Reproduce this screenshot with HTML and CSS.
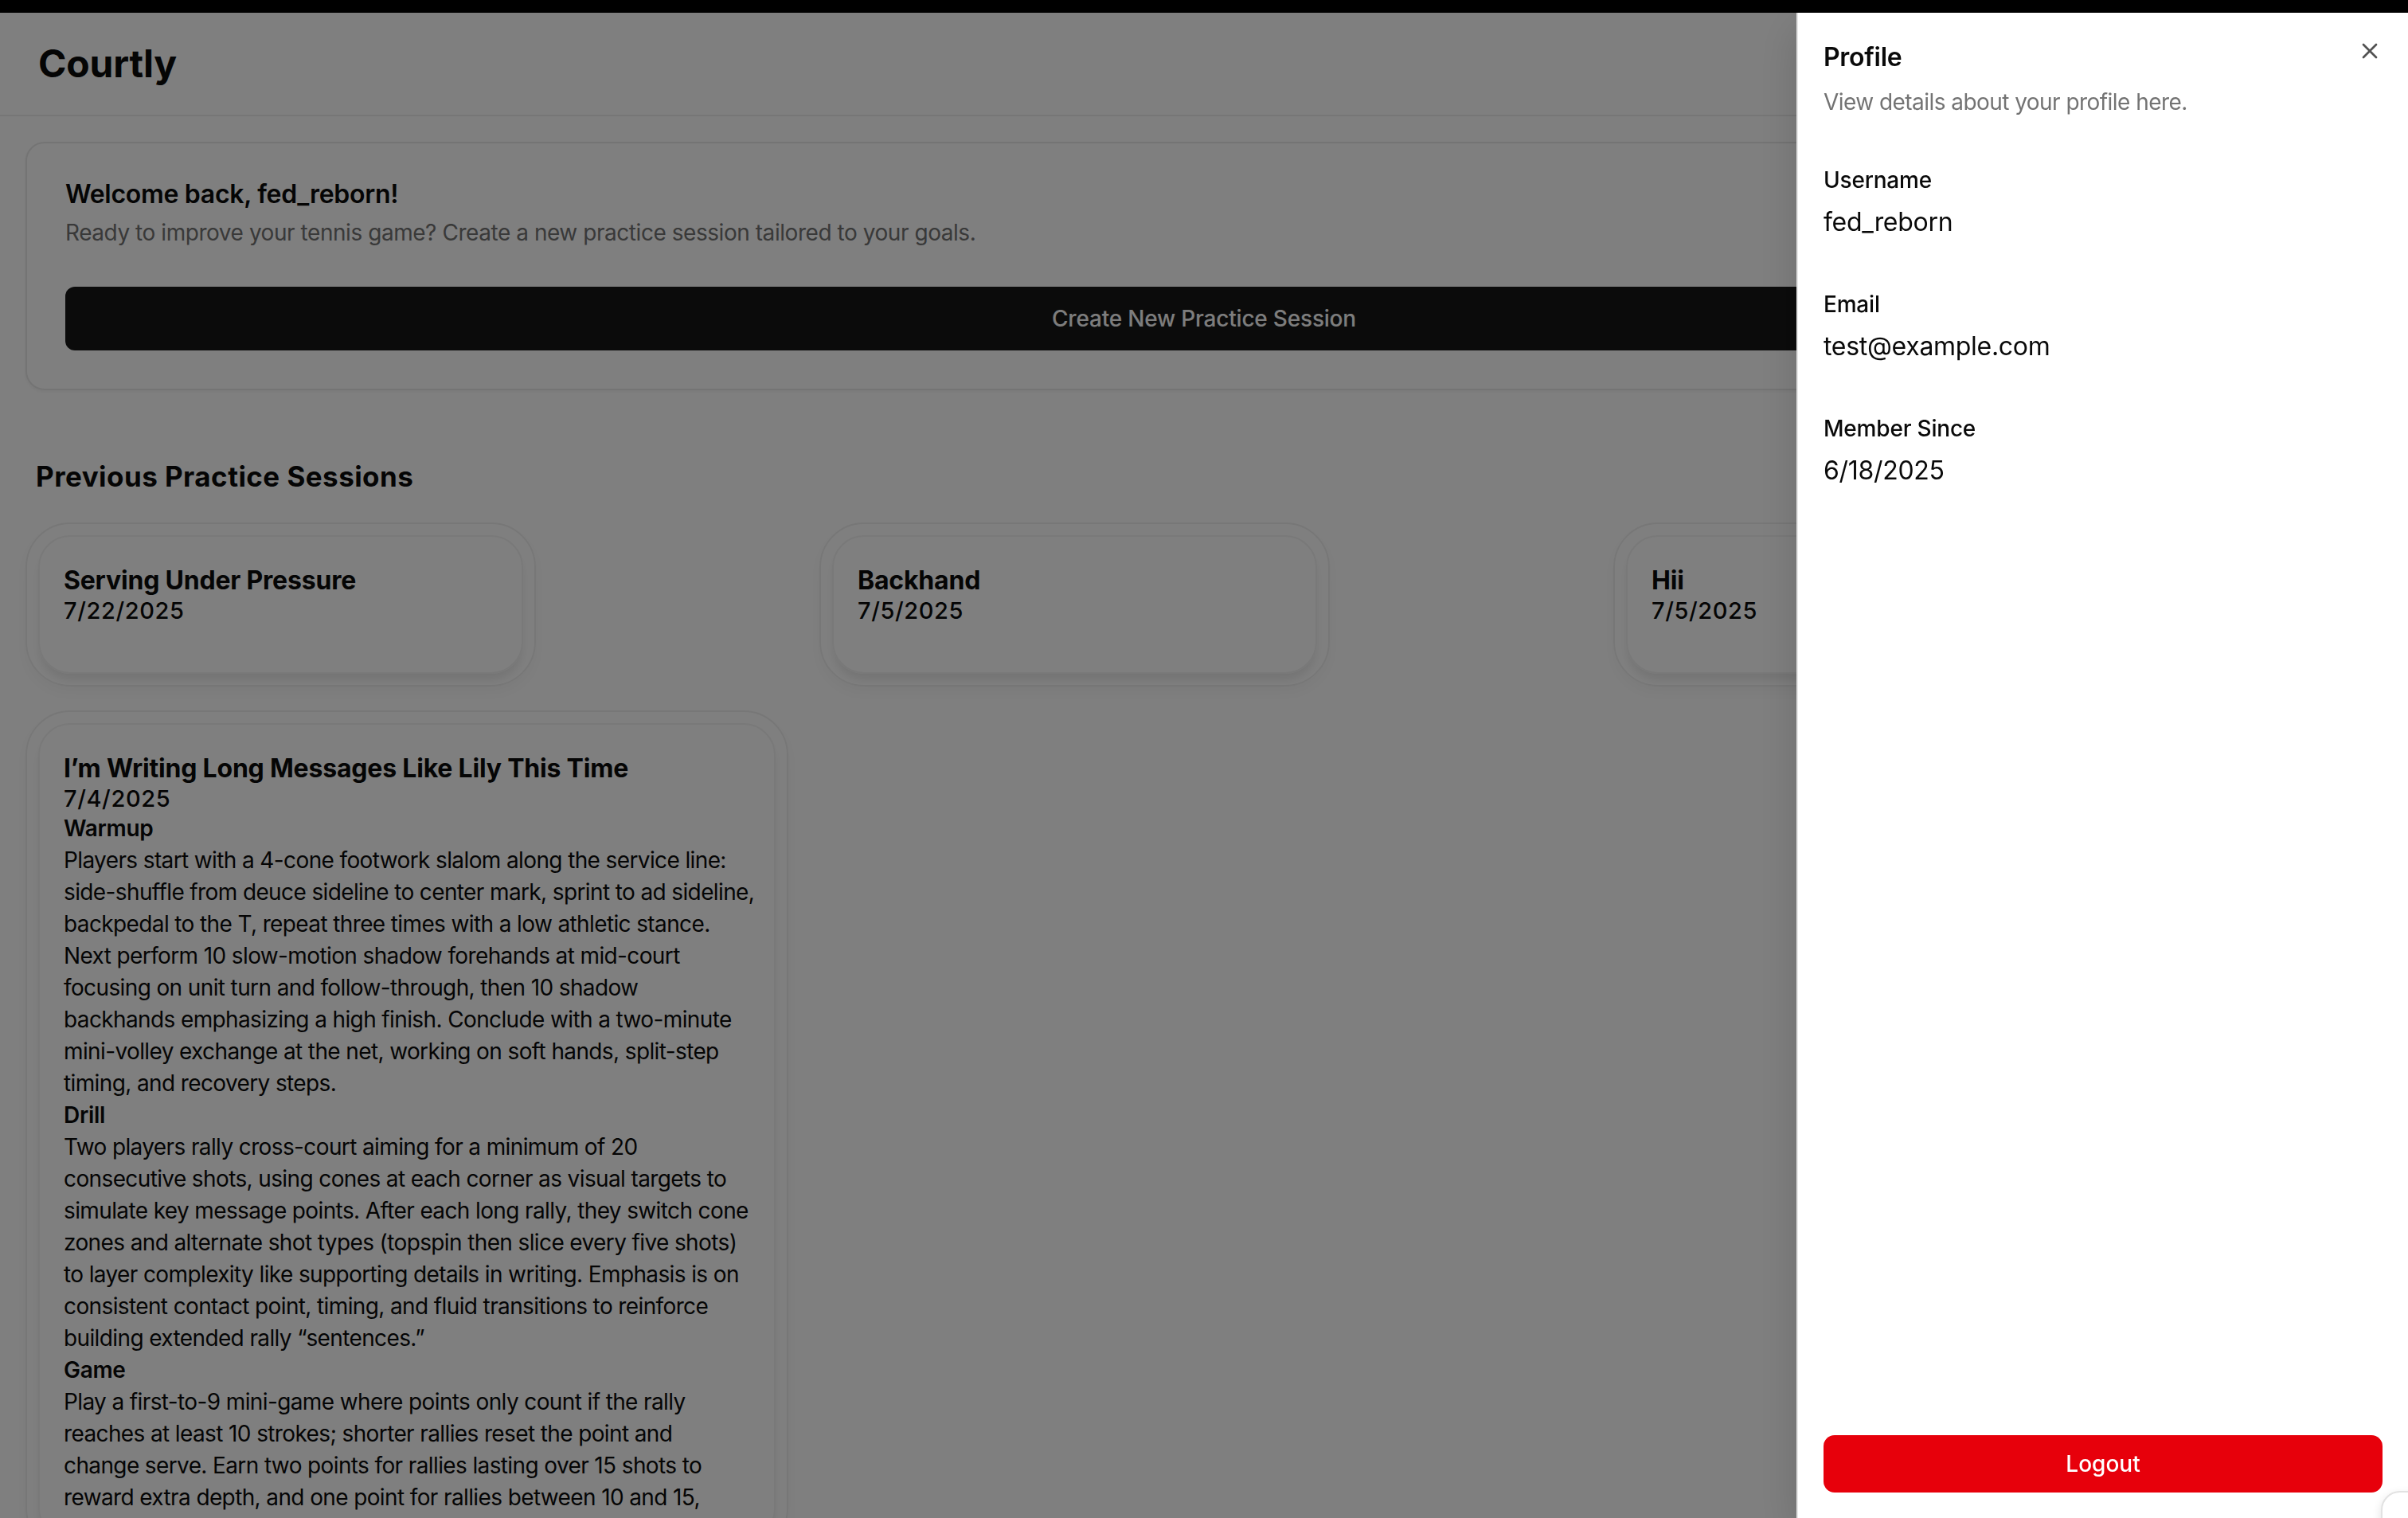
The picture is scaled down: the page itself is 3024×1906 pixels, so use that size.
FILE: index.html
```html
<!DOCTYPE html>
<html lang="en">
<head>
<meta charset="utf-8">
<title>Courtly</title>
<link rel="stylesheet" href="styles.css">
</head>
<body>
<div class="topbar"></div>
<div class="app">
  <header class="site-header">
    <h1 class="brand">Courtly</h1>
  </header>
  <main class="main">
    <section class="welcome-card">
      <div class="welcome-head">
        <h2 class="welcome-title">Welcome back, fed_reborn!</h2>
        <p class="welcome-desc">Ready to improve your tennis game? Create a new practice session tailored to your goals.</p>
      </div>
      <button class="primary-btn" type="button">Create New Practice Session</button>
    </section>

    <section class="sessions">
      <h2 class="sessions-title">Previous Practice Sessions</h2>
      <div class="session-grid">
        <article class="session">
          <div class="session-inner">
            <h3 class="session-title">Serving Under Pressure</h3>
            <p class="session-date">7/22/2025</p>
          </div>
        </article>
        <article class="session">
          <div class="session-inner">
            <h3 class="session-title">Backhand</h3>
            <p class="session-date">7/5/2025</p>
          </div>
        </article>
        <article class="session">
          <div class="session-inner">
            <h3 class="session-title">Hii</h3>
            <p class="session-date">7/5/2025</p>
          </div>
        </article>
        <article class="session session--wide">
          <div class="session-inner">
            <h3 class="session-title">I’m Writing Long Messages Like Lily This Time</h3>
            <p class="session-date">7/4/2025</p>
            <h4 class="part-title">Warmup</h4>
            <p class="part-text">Players start with a 4-cone footwork slalom along the service line:<br>side-shuffle from deuce sideline to center mark, sprint to ad sideline,<br>backpedal to the T, repeat three times with a low athletic stance.<br>Next perform 10 slow-motion shadow forehands at mid-court<br>focusing on unit turn and follow-through, then 10 shadow<br>backhands emphasizing a high finish. Conclude with a two-minute<br>mini-volley exchange at the net, working on soft hands, split-step<br>timing, and recovery steps.</p>
            <h4 class="part-title">Drill</h4>
            <p class="part-text">Two players rally cross-court aiming for a minimum of 20<br>consecutive shots, using cones at each corner as visual targets to<br>simulate key message points. After each long rally, they switch cone<br>zones and alternate shot types (topspin then slice every five shots)<br>to layer complexity like supporting details in writing. Emphasis is on<br>consistent contact point, timing, and fluid transitions to reinforce<br>building extended rally “sentences.”</p>
            <h4 class="part-title">Game</h4>
            <p class="part-text">Play a first-to-9 mini-game where points only count if the rally<br>reaches at least 10 strokes; shorter rallies reset the point and<br>change serve. Earn two points for rallies lasting over 15 shots to<br>reward extra depth, and one point for rallies between 10 and 15,</p>
          </div>
        </article>
      </div>
    </section>
  </main>
</div>

<div class="overlay"></div>

<aside class="sheet">
  <button class="sheet-close" type="button" aria-label="Close">
    <svg viewBox="0 0 24 24" width="32" height="32" fill="none" stroke="currentColor" stroke-width="2" stroke-linecap="round" stroke-linejoin="round"><path d="M18 6 6 18"/><path d="m6 6 12 12"/></svg>
  </button>
  <div class="sheet-head">
    <h2 class="sheet-title">Profile</h2>
    <p class="sheet-desc">View details about your profile here.</p>
  </div>
  <div class="sheet-body">
    <div class="field">
      <span class="field-label">Username</span>
      <span class="field-value">fed_reborn</span>
    </div>
    <div class="field">
      <span class="field-label">Email</span>
      <span class="field-value">test@example.com</span>
    </div>
    <div class="field">
      <span class="field-label">Member Since</span>
      <span class="field-value">6/18/2025</span>
    </div>
  </div>
  <div class="sheet-foot">
    <button class="logout-btn" type="button">Logout</button>
  </div>
</aside>

<div class="corner-widget"></div>
</body>
</html>
```

FILE: styles.css
```css
* { box-sizing: border-box; }

html, body {
  margin: 0;
  padding: 0;
  height: 100%;
  overflow: hidden;
}

body {
  font-family: Inter, "Noto Sans", "Liberation Sans", sans-serif;
  color: #0a0a0a;
  background: #ffffff;
}

h1, h2, h3, h4, p { margin: 0; }

button { font-family: inherit; }

.topbar {
  height: 16px;
  background: #000;
}

/* Header */
.site-header {
  height: 130px;
  padding: 0 48px;
  display: flex;
  align-items: center;
  border-bottom: 2px solid #ececec;
}

.brand {
  font-size: 48px;
  line-height: 64px;
  font-weight: 700;
  letter-spacing: -0.2px;
}

/* Main */
.main {
  padding: 32px;
}

.welcome-card {
  border: 2px solid #e8e8e8;
  border-radius: 24px;
  padding: 48px;
  box-shadow: 0 2px 4px rgba(0, 0, 0, 0.05);
  display: flex;
  flex-direction: column;
  gap: 48px;
}

.welcome-head {
  display: flex;
  flex-direction: column;
  gap: 12px;
}

.welcome-title {
  font-size: 32px;
  line-height: 32px;
  font-weight: 600;
  letter-spacing: -0.3px;
}

.welcome-desc {
  font-size: 28px;
  line-height: 40px;
  color: #737373;
  letter-spacing: -0.45px;
}

.primary-btn {
  height: 80px;
  border: 0;
  border-radius: 12px;
  background: #171717;
  color: #fafafa;
  font-size: 28px;
  font-weight: 500;
  letter-spacing: -0.2px;
}

/* Sessions */
.sessions {
  margin-top: 84px;
}

.sessions-title {
  margin-left: 13px;
  font-size: 35px;
  line-height: 48px;
  font-weight: 700;
  letter-spacing: 0.45px;
}

.session-grid {
  margin-top: 34px;
  display: grid;
  grid-template-columns: repeat(3, 966px);
  column-gap: 31px;
  row-gap: 30px;
  align-items: start;
}

.session {
  justify-self: start;
  min-width: 641px;
  padding: 14px;
  border: 2px solid #efefef;
  border-radius: 56px;
  box-shadow: 0 8px 20px rgba(0, 0, 0, 0.04);
}

.session--wide {
  justify-self: stretch;
  margin-right: 8px;
}

.session-inner {
  min-height: 174px;
  padding: 35px 30px 32px;
  border: 2px solid #f2f2f2;
  border-radius: 40px;
  box-shadow: 0 10px 12px -2px rgba(0, 0, 0, 0.09);
}

.session-title {
  font-size: 32px;
  line-height: 40px;
  font-weight: 700;
  letter-spacing: -0.2px;
}

.session-date {
  font-size: 29px;
  line-height: 35px;
  font-weight: 500;
  letter-spacing: 0.6px;
}

.part-title {
  font-size: 28px;
  line-height: 40px;
  font-weight: 600;
  letter-spacing: -0.3px;
}

.part-text {
  font-size: 28px;
  line-height: 40px;
  font-weight: 400;
  letter-spacing: -0.62px;
  white-space: nowrap;
}

/* Overlay + sheet */
.overlay {
  position: fixed;
  inset: 0;
  background: rgba(0, 0, 0, 0.5);
}

.sheet {
  position: fixed;
  top: 16px;
  right: 0;
  bottom: 0;
  width: 768px;
  background: #ffffff;
  border-left: 2px solid #e5e5e5;
  box-shadow: 0 20px 50px rgba(0, 0, 0, 0.15);
  display: flex;
  flex-direction: column;
}

.sheet-close {
  position: absolute;
  top: 32px;
  right: 32px;
  width: 32px;
  height: 32px;
  padding: 0;
  border: 0;
  background: transparent;
  color: #0a0a0a;
  opacity: 0.7;
  display: flex;
}

.sheet-head {
  padding: 32px 32px 0;
  display: flex;
  flex-direction: column;
  gap: 12px;
}

.sheet-title {
  font-size: 32px;
  line-height: 48px;
  font-weight: 600;
  letter-spacing: -0.3px;
}

.sheet-desc {
  font-size: 28px;
  line-height: 40px;
  color: #737373;
  letter-spacing: -0.55px;
}

.sheet-body {
  padding: 58px 32px 0;
  display: flex;
  flex-direction: column;
  gap: 59px;
}

.field {
  display: flex;
  flex-direction: column;
  gap: 9px;
}

.field-label {
  font-size: 28px;
  line-height: 40px;
  font-weight: 500;
  letter-spacing: -0.2px;
}

.field-value {
  font-size: 32px;
  line-height: 48px;
  letter-spacing: -0.3px;
}

.sheet-foot {
  margin-top: auto;
  padding: 32px;
}

.logout-btn {
  width: 100%;
  height: 72px;
  border: 0;
  border-radius: 14px;
  background: #e7000b;
  color: #ffffff;
  font-size: 28px;
  font-weight: 500;
}

.corner-widget {
  position: fixed;
  left: 2990px;
  top: 1872px;
  width: 100px;
  height: 100px;
  background: #ffffff;
  border: 2px solid #e2e2e2;
  border-radius: 24px;
  box-shadow: 0 4px 12px rgba(0, 0, 0, 0.12);
}
```
